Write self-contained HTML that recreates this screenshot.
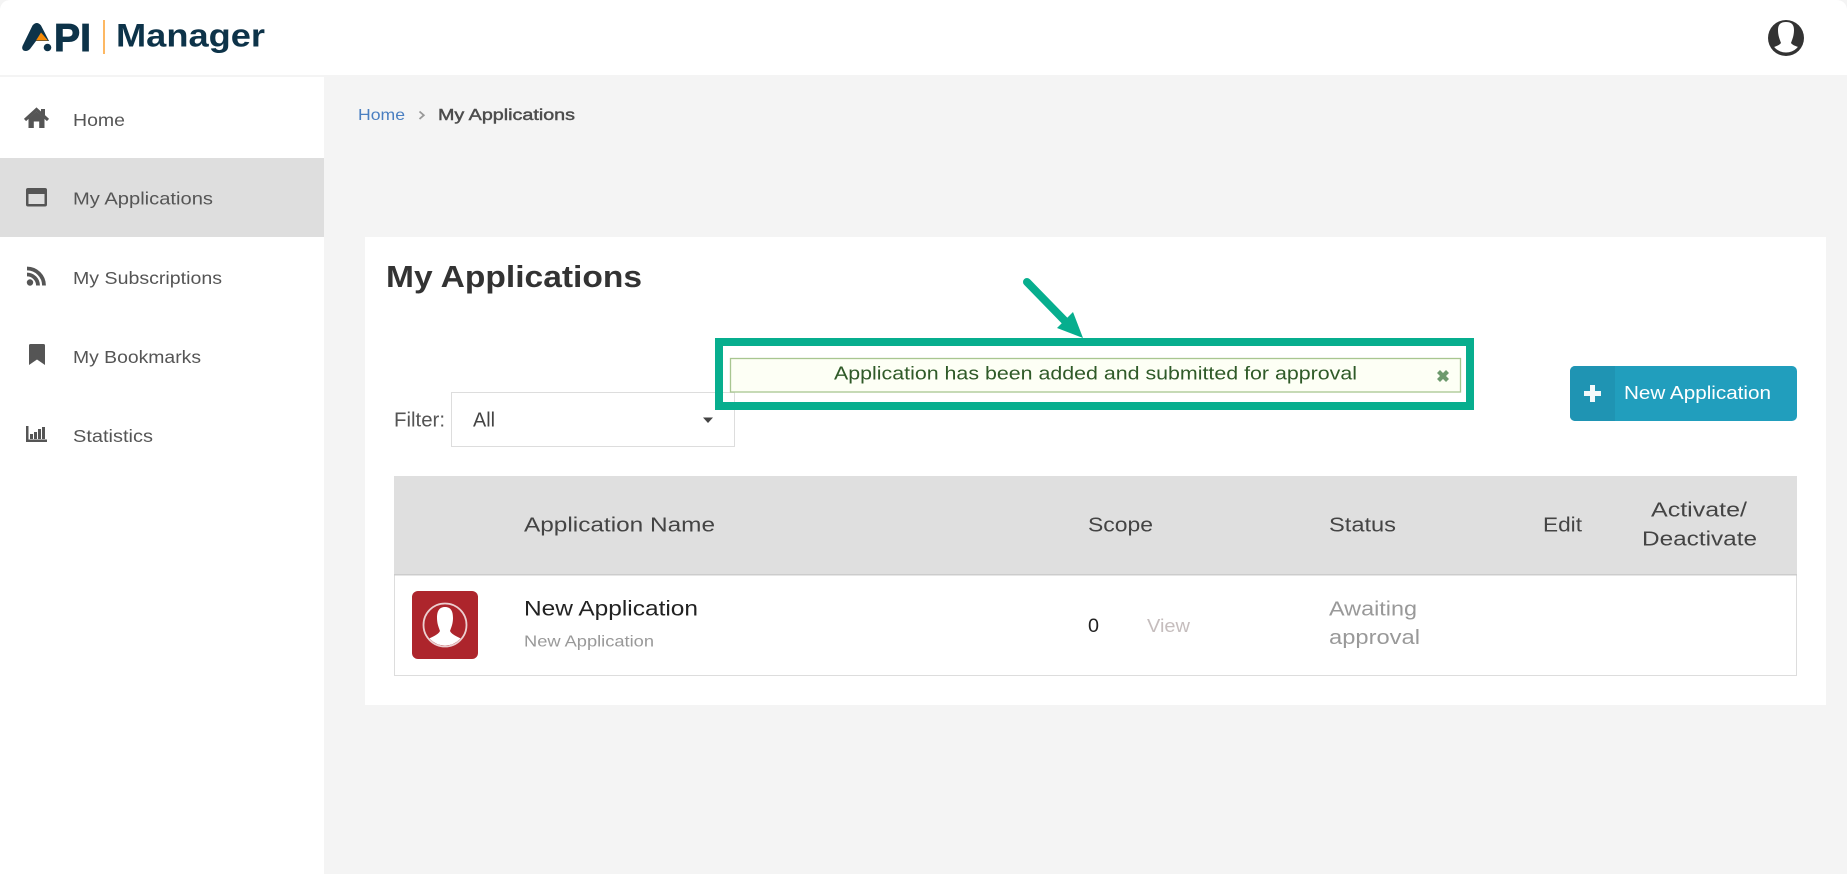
<!DOCTYPE html>
<html lang="en"><head><meta charset="utf-8"><title>My Applications</title>
<style>
html,body{margin:0;padding:0;width:1847px;height:874px;overflow:hidden;background:#f4f4f4}
svg{display:block}
text{font-family:"Liberation Sans",sans-serif}
</style></head><body>
<svg xmlns="http://www.w3.org/2000/svg" width="1847" height="874" viewBox="0 0 1847 874">
<defs>
<clipPath id="c1"><circle cx="445" cy="625" r="20.500"/></clipPath>
<clipPath id="c2"><ellipse cx="1786" cy="37" rx="15.500" ry="15.500"/></clipPath>
</defs>
<rect width="1847" height="874" fill="#f4f4f4"/>
<!-- header -->
<path d="M0 75V10A10 10 0 0 1 10 0H1837A10 10 0 0 1 1847 10V75Z" fill="#fff"/>
<!-- logo -->
<path d="M22.500 46L32.500 25.500Q36.800 20.500 41 25.500L49 41H36L30 49Q27 52 23.500 50.500Q21.500 49 22.500 46Z" fill="#0d3349"/>
<path d="M36 40.500L41 32.500L48 40.500Z" fill="#f58a07"/>
<circle cx="47.500" cy="47.500" r="3.800" fill="#0d3349"/>
<text x="54" y="51" font-size="39" font-weight="700" fill="#0d3349" stroke="#0d3349" stroke-width="1" textLength="37" lengthAdjust="spacingAndGlyphs">PI</text>
<rect x="103" y="20" width="2" height="34" fill="#fdb863"/>
<text x="116" y="46.500" font-size="32" font-weight="700" fill="#0d3349" textLength="149" lengthAdjust="spacingAndGlyphs">Manager</text>
<!-- avatar -->
<circle cx="1786" cy="38" r="18" fill="#333"/>
<path d="M1778 30C1778 24 1781 22 1786 22C1791 22 1794 24 1794 30C1794 36 1792 40 1791 43C1793 46 1799 47 1804 49L1800 60H1772L1768 49C1773 47 1779 46 1781 43C1780 40 1778 36 1778 30Z" fill="#fff" clip-path="url(#c2)"/>
<!-- sidebar -->
<rect x="0" y="77" width="324" height="797" fill="#fff"/>
<rect x="0" y="158" width="324" height="79" fill="#dedede"/>
<g fill="#555">
<path d="M28.500 118.500L36.500 111.500L44.500 118.500V128H39.200V121.500H33.800V128H28.500Z"/>
<path d="M25 120L36.500 109.500L48 120" fill="none" stroke="#555" stroke-width="3.200"/>
<rect x="41" y="109" width="4" height="6"/>
<rect x="26" y="188" width="21" height="18.500" rx="2"/>
<rect x="28.500" y="194" width="16" height="10" fill="#dedede"/>
<circle cx="30" cy="282.500" r="3.200"/>
<path d="M27 274.500A11 11 0 0 1 38 285.500M27 268.500A17 17 0 0 1 44 285.500" fill="none" stroke="#555" stroke-width="3.800"/>
<path d="M29 345.500a1.500 1.500 0 0 1 1.500-1.500h13a1.500 1.500 0 0 1 1.500 1.500V365L37 359.500L29 365Z"/>
<rect x="26" y="426" width="2.500" height="16"/><rect x="26" y="439.500" width="21" height="2.500"/>
<rect x="30" y="434" width="3" height="5"/><rect x="34" y="432" width="3" height="7"/><rect x="38" y="429" width="3" height="10"/><rect x="42" y="427" width="3" height="12"/>
</g>
<g font-size="17.500" fill="#555">
<text x="73" y="126" textLength="52" lengthAdjust="spacingAndGlyphs">Home</text>
<text x="73" y="204.500" textLength="140" lengthAdjust="spacingAndGlyphs">My Applications</text>
<text x="73" y="284" textLength="149" lengthAdjust="spacingAndGlyphs">My Subscriptions</text>
<text x="73" y="363" textLength="128" lengthAdjust="spacingAndGlyphs">My Bookmarks</text>
<text x="73" y="442" textLength="80" lengthAdjust="spacingAndGlyphs">Statistics</text>
</g>
<!-- breadcrumb -->
<text x="358" y="120" font-size="16" fill="#4a7fc1" textLength="47" lengthAdjust="spacingAndGlyphs">Home</text>
<path d="M419.500 111.500L423.800 115.200L419.500 119" fill="none" stroke="#999" stroke-width="1.800"/>
<text x="438" y="120" font-size="15.500" fill="#4d4d4d" stroke="#4d4d4d" stroke-width=".45" textLength="137" lengthAdjust="spacingAndGlyphs">My Applications</text>
<!-- card -->
<rect x="365" y="237" width="1461" height="468" fill="#fff"/>
<text x="386" y="287" font-size="31" font-weight="700" fill="#333" textLength="256" lengthAdjust="spacingAndGlyphs">My Applications</text>
<!-- filter -->
<text x="394" y="426.500" font-size="20" fill="#555" textLength="51" lengthAdjust="spacingAndGlyphs">Filter:</text>
<rect x="451.500" y="392.500" width="283" height="54" fill="#fff" stroke="#ddd"/>
<text x="473" y="426.500" font-size="20" fill="#444" textLength="22" lengthAdjust="spacingAndGlyphs">All</text>
<path d="M703 417.500H713L708 423Z" fill="#444"/>
<!-- alert -->
<rect x="730.500" y="358.500" width="730" height="33.500" fill="#fdfff5" stroke="#a8c690" stroke-width="1.300"/>
<text x="834" y="379.500" font-size="18" fill="#2f5a28" textLength="523" lengthAdjust="spacingAndGlyphs">Application has been added and submitted for approval</text>
<path d="M1438.500 371.500L1447.500 380.500M1447.500 371.500L1438.500 380.500" stroke="#6d9a6d" stroke-width="4.200" fill="none"/>
<!-- highlight -->
<rect x="719" y="342" width="751" height="64" fill="none" stroke="#07ae8e" stroke-width="8"/>
<path d="M1027 282L1065 321" stroke="#07ae8e" stroke-width="8" stroke-linecap="round" fill="none"/>
<path d="M1073 312L1057 328L1083 338Z" fill="#07ae8e"/>
<!-- button -->
<rect x="1570" y="366" width="227" height="55" rx="5" fill="#219ebd"/>
<path d="M1575 366H1615V421H1575A5 5 0 0 1 1570 416V371A5 5 0 0 1 1575 366Z" fill="#1f94b3"/>
<path d="M1584 393.500H1601M1592.500 385V402" stroke="#f2f9fb" stroke-width="5" fill="none"/>
<text x="1624" y="399" font-size="18" fill="#fff" textLength="147" lengthAdjust="spacingAndGlyphs">New Application</text>
<!-- table -->
<rect x="394.500" y="574.500" width="1402" height="101" fill="#fff" stroke="#ddd"/>
<rect x="394" y="476" width="1403" height="98" fill="#dfdfdf"/>
<rect x="394" y="574" width="1403" height="1.500" fill="#ccc"/>
<g font-size="20" fill="#444">
<text x="524" y="531.500" textLength="191" lengthAdjust="spacingAndGlyphs">Application Name</text>
<text x="1088" y="531.500" textLength="65" lengthAdjust="spacingAndGlyphs">Scope</text>
<text x="1329" y="531.500" textLength="67" lengthAdjust="spacingAndGlyphs">Status</text>
<text x="1543" y="531.500" textLength="39" lengthAdjust="spacingAndGlyphs">Edit</text>
<text x="1651" y="516.500" textLength="96" lengthAdjust="spacingAndGlyphs">Activate/</text>
<text x="1642" y="545.500" textLength="115" lengthAdjust="spacingAndGlyphs">Deactivate</text>
</g>
<!-- row -->
<rect x="412" y="591" width="66" height="68" rx="6" fill="#ad252c"/>
<circle cx="445" cy="625" r="21.500" fill="none" stroke="#eccfd0" stroke-width="1.800"/>
<path d="M437 618C437 610 440 607 445 607C450 607 453 610 453 618C453 624 451 628 450 631C452 635 458 637 464 640V650H426V640C432 637 438 635 440 631C439 628 437 624 437 618Z" fill="#fff" clip-path="url(#c1)"/>
<text x="524" y="615.500" font-size="21" fill="#222" textLength="174" lengthAdjust="spacingAndGlyphs">New Application</text>
<text x="524" y="646.500" font-size="16" fill="#999" textLength="130" lengthAdjust="spacingAndGlyphs">New Application</text>
<text x="1088" y="632" font-size="19" fill="#222" textLength="11" lengthAdjust="spacingAndGlyphs">0</text>
<text x="1147" y="632" font-size="18.500" fill="#c5bdbd" textLength="43" lengthAdjust="spacingAndGlyphs">View</text>
<text x="1329" y="615.500" font-size="20" fill="#999" textLength="88" lengthAdjust="spacingAndGlyphs">Awaiting</text>
<text x="1329" y="644" font-size="20" fill="#999" textLength="91" lengthAdjust="spacingAndGlyphs">approval</text>
</svg>
</body></html>
